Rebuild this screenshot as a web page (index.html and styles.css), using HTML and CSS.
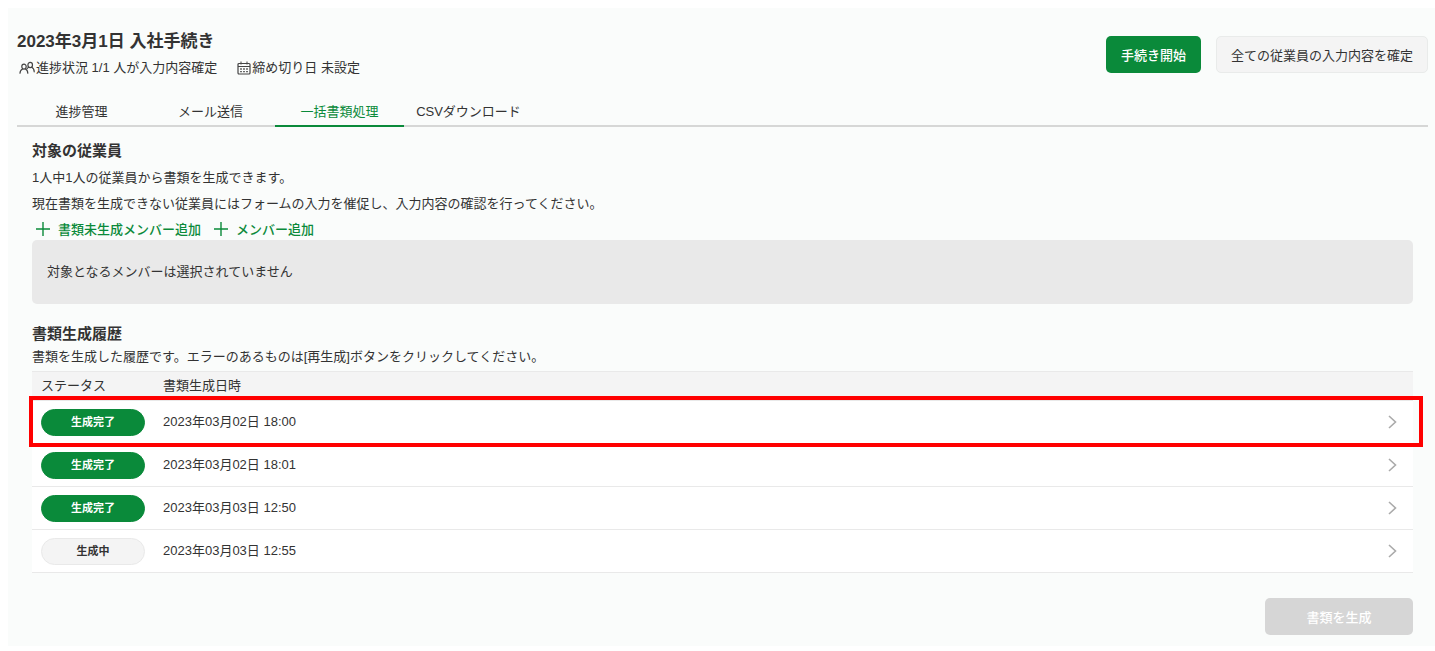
FILE: index.html
```html
<!DOCTYPE html>
<html lang="ja">
<head>
    <meta charset="UTF-8">
    <meta name="viewport" content="width=device-width, initial-scale=1.0">
    <title>2023年3月1日 入社手続き</title>
    <link rel="stylesheet" href="styles.css">
</head>
<body>

    <main class="page">
        <header class="page-header">
            <div>
                <h1>2023年3月1日 入社手続き</h1>
                <div class="meta">
                    <span class="meta-item">
                        <svg width="16" height="14" viewBox="0 0 16 14" fill="none" stroke="#444" stroke-width="1.2" stroke-linecap="round">
                            <ellipse cx="5" cy="5.6" rx="2.2" ry="2.5"/>
                            <path d="M1 12.2C1 10 2 8.8 3.6 8M6.4 8c1.5.7 2.4 2 2.4 4.2"/>
                            <ellipse cx="11.2" cy="4" rx="2.3" ry="2.6"/>
                            <path d="M9.8 6.3c-.8.3-1.4.8-1.8 1.5M12.6 6.3c1.7.7 2.6 2.2 2.6 4.5"/>
                        </svg>
                        進捗状況 1/1 人が入力内容確定
                    </span>
                    <span class="meta-item">
                        <svg width="14" height="14" viewBox="0 0 14 14" fill="none" stroke="#444">
                            <rect x="1" y="2.5" width="12" height="10.5" rx="1" stroke-width="1.2"/>
                            <path d="M1 5.5h12M4 0.5v3M10 0.5v3"/>
                            <path d="M3.2 8h8M3.2 10.6h8" stroke-width="1.4" stroke-dasharray="1.6 1.4"/>
                        </svg>
                        締め切り日 未設定
                    </span>
                </div>
            </div>
            <div class="actions">
                <button type="button" class="btn btn-primary">手続き開始</button>
                <button type="button" class="btn btn-default">全ての従業員の入力内容を確定</button>
            </div>
        </header>

        <nav class="tabs">
            <a href="#" class="tab">進捗管理</a>
            <a href="#" class="tab">メール送信</a>
            <a href="#" class="tab active">一括書類処理</a>
            <a href="#" class="tab">CSVダウンロード</a>
        </nav>

        <section class="section targets">
            <h2>対象の従業員</h2>
            <p>1人中1人の従業員から書類を生成できます。</p>
            <p>現在書類を生成できない従業員にはフォームの入力を催促し、入力内容の確認を行ってください。</p>
            <div class="add-links">
                <button type="button" class="add-link">
                    <svg width="14" height="14" viewBox="0 0 14 14" stroke="#0a8a3a" stroke-width="1.4"><path d="M7 0v14M0 7h14"/></svg>
                    書類未生成メンバー追加
                </button>
                <button type="button" class="add-link">
                    <svg width="14" height="14" viewBox="0 0 14 14" stroke="#0a8a3a" stroke-width="1.4"><path d="M7 0v14M0 7h14"/></svg>
                    メンバー追加
                </button>
            </div>
            <div class="empty-box">対象となるメンバーは選択されていません</div>
        </section>

        <section class="section history">
            <h2>書類生成履歴</h2>
            <p>書類を生成した履歴です。エラーのあるものは[再生成]ボタンをクリックしてください。</p>
            <table class="history-table">
                <thead>
                    <tr>
                        <th class="col-status">ステータス</th>
                        <th>書類生成日時</th>
                        <th class="col-arrow"></th>
                    </tr>
                </thead>
                <tbody>
                    <tr class="highlight">
                        <td><span class="badge badge-done">生成完了</span></td>
                        <td>2023年03月02日 18:00</td>
                        <td class="col-arrow"><a href="#" aria-label="詳細"><svg width="9" height="14" viewBox="0 0 9 14" fill="none" stroke="#aaa" stroke-width="1.6"><path d="M1 1l6.5 6L1 13"/></svg></a></td>
                    </tr>
                    <tr>
                        <td><span class="badge badge-done">生成完了</span></td>
                        <td>2023年03月02日 18:01</td>
                        <td class="col-arrow"><a href="#" aria-label="詳細"><svg width="9" height="14" viewBox="0 0 9 14" fill="none" stroke="#aaa" stroke-width="1.6"><path d="M1 1l6.5 6L1 13"/></svg></a></td>
                    </tr>
                    <tr>
                        <td><span class="badge badge-done">生成完了</span></td>
                        <td>2023年03月03日 12:50</td>
                        <td class="col-arrow"><a href="#" aria-label="詳細"><svg width="9" height="14" viewBox="0 0 9 14" fill="none" stroke="#aaa" stroke-width="1.6"><path d="M1 1l6.5 6L1 13"/></svg></a></td>
                    </tr>
                    <tr>
                        <td><span class="badge">生成中</span></td>
                        <td>2023年03月03日 12:55</td>
                        <td class="col-arrow"><a href="#" aria-label="詳細"><svg width="9" height="14" viewBox="0 0 9 14" fill="none" stroke="#aaa" stroke-width="1.6"><path d="M1 1l6.5 6L1 13"/></svg></a></td>
                    </tr>
                </tbody>
            </table>
            <div class="submit">
                <button type="button" class="btn btn-generate" disabled>書類を生成</button>
            </div>
        </section>
    </main>

</body>
</html>
```
FILE: styles.css
```css
* {
    box-sizing: border-box;
}
body {
    margin: 8px 0 0 8px;
    background-color: #fff;
    color: #333;
    font-family: "Liberation Sans", Arial, "Noto Sans CJK JP", sans-serif;
    font-size: 13px;
    line-height: 26px;
}
h1, h2, p {
    margin: 0;
}
svg {
    display: block;
    flex: none;
}
button {
    font-family: inherit;
    font-size: 13px;
    cursor: pointer;
}
.page {
    padding: 21px 7px 11px 9px;
    background-color: #fafcfb;
}

/* ヘッダー */
.page-header {
    display: flex;
    justify-content: space-between;
    margin-bottom: 17px;
}
h1 {
    font-size: 17px;
    line-height: 26px;
}
.meta {
    display: flex;
    gap: 18px;
}
.meta-item {
    display: flex;
    align-items: center;
    gap: 1px;
    padding-left: 2px;
}
.actions {
    display: flex;
    align-items: flex-start;
    gap: 15px;
    padding-top: 7px;
}
.btn {
    height: 37px;
    padding: 0 14px;
    border: 1px solid transparent;
    border-radius: 5px;
}
.btn-primary {
    background-color: #0a8a3a;
    color: #fff;
    font-weight: 500;
}
.btn-default {
    background-color: #f4f4f4;
    border-color: #e9ebea;
    color: #333;
}

/* タブ */
.tabs {
    display: flex;
    box-shadow: inset 0 -2px #d6d7d6;
}
.tab {
    width: 129px;
    height: 29px;
    border-bottom: 2px solid transparent;
    color: #333;
    text-align: center;
    text-decoration: none;
    line-height: 27px;
}
.tab.active {
    border-bottom-color: #0a8a3a;
    color: #0a8a3a;
}

.section {
    padding: 0 15px;
}
h2 {
    font-size: 15px;
    line-height: 20px;
}
.targets {
    margin-top: 14px;
}
.targets h2 {
    margin-bottom: 4px;
}
.add-links {
    display: flex;
    gap: 13px;
    padding-left: 4px;
}
.add-link {
    display: flex;
    align-items: center;
    gap: 8px;
    height: 23px;
    padding: 0;
    border: none;
    background: none;
    color: #0a8a3a;
    font-weight: 500;
}
.empty-box {
    padding: 19px 15px;
    border-radius: 5px;
    background-color: #e9e9e9;
}

/* 書類生成履歴 */
.history {
    margin-top: 20px;
}
.history-table {
    width: 100%;
    margin-top: 1px;
    border-spacing: 0;
}
.history-table th {
    height: 30px;
    padding: 0 9px;
    border-top: 1px solid #e9e9e9;
    border-bottom: 1px solid #e9e9e9;
    background-color: #f4f4f4;
    font-weight: normal;
    text-align: left;
}
.history-table td {
    height: 43px;
    padding: 0 9px;
    border-bottom: 1px solid #e9e9e9;
    background-color: #fff;
}
.history-table .col-status {
    width: 122px;
}
.history-table .col-arrow {
    width: 41px;
    padding: 0 16px;
}
.badge {
    display: block;
    width: 104px;
    height: 27px;
    border: 1px solid #e9e9e9;
    border-radius: 14px;
    background-color: #f4f4f4;
    font-size: 11px;
    font-weight: bold;
    line-height: 25px;
    text-align: center;
}
.badge-done {
    border-color: #0a8a3a;
    background-color: #0a8a3a;
    color: #fff;
}
/* 対象の行を囲む赤枠 */
.highlight {
    position: relative;
}
.highlight::after {
    content: "";
    position: absolute;
    top: -5px;
    right: -10px;
    bottom: -3px;
    left: -3px;
    border: 4px solid #f00;
    pointer-events: none;
}
.submit {
    display: flex;
    justify-content: flex-end;
    margin-top: 25px;
}
.btn-generate {
    width: 148px;
    background-color: #d6d6d6;
    color: #fff;
    font-weight: 500;
    cursor: default;
}
```
